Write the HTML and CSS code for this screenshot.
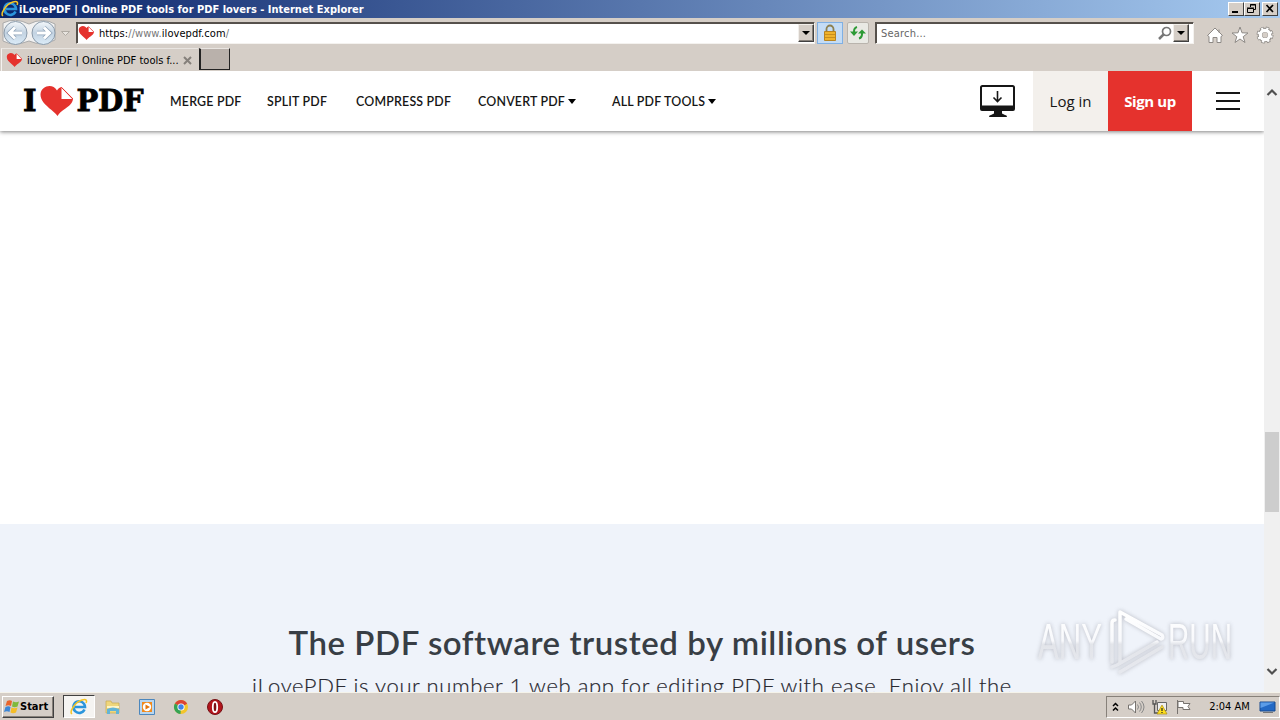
FILE: index.html
```
<!DOCTYPE html>
<html lang="en">
<head>
  <meta charset="UTF-8">
  <meta name="viewport" content="width=device-width, initial-scale=1">
  <title>iLovePDF | Online PDF tools for PDF lovers</title>
  <link rel="stylesheet" href="styles.css">
</head>
<body>
  <svg class="defs" width="0" height="0">
    <defs>
      <linearGradient id="orb" x1="0" y1="0" x2="0" y2="1">
        <stop offset="0" stop-color="#f4f8fb"/>
        <stop offset=".5" stop-color="#c3d3e2"/>
        <stop offset="1" stop-color="#dcecf8"/>
      </linearGradient>
      <symbol id="heart" viewBox="0 0 34 30">
        <path d="M17.500 30C15 26 8 22 3.500 16.500-.5 11.500-.5 5 3.500 2.200 8-1.200 14-.5 17 4.500 18 2.800 19.500 1.500 21.500 1L33 12.500C33 17 29 20 25.500 22.500 22 25 19 27 17.500 30Z" fill="#e5322d"/>
        <path d="M21.500 1.500V13H32.500Z" fill="#fff"/>
        <path d="M21.500 1.500L32.800 13" stroke="#e5322d" fill="none"/>
      </symbol>
      <symbol id="ie" viewBox="0 0 18 18">
        <path d="M14.500 11.500A5.800 5.800 0 1 1 15 9H5" fill="none" stroke="#2b95dc" stroke-width="2.600"/>
        <path d="M2 16C-1 14 5 4 12 2 17 .5 17 3 16 5" fill="none" stroke="#f5c526" stroke-width="1.500"/>
      </symbol>
    </defs>
  </svg>

  <!-- Title bar -->
  <div class="titlebar">
    <svg class="title-icon" width="18" height="18"><use href="#ie"/></svg>
    <span class="title-text">iLovePDF | Online PDF tools for PDF lovers - Internet Explorer</span>
    <div class="win-buttons">
      <span class="win-btn"><svg width="14" height="12"><path d="M3 9h6" stroke="#000" stroke-width="2"/></svg></span>
      <span class="win-btn restore"><svg width="14" height="12"><path d="M5.500 4V1.500h5v5H9M5 2h6M2.500 5.500h6v4h-6zM2 5h7" fill="none" stroke="#000"/></svg></span>
      <span class="win-btn"><svg width="14" height="12"><path d="M3.500 2L10 9M10 2L3.500 9" stroke="#000" stroke-width="1.700"/></svg></span>
    </div>
  </div>

  <!-- Address bar -->
  <div class="toolbar">
    <svg class="nav-orbs" width="74" height="29" viewBox="0 0 74 29">
      <path d="M3 5Q15-1 29 6 43-1 55 6V22Q43 29 29 23 14 29 3 23Z" fill="#f1f1f1" stroke="#aaa"/>
      <circle cx="15.500" cy="15" r="11.500" fill="url(#orb)" stroke="#8b9bab"/>
      <circle cx="43.500" cy="15" r="11.500" fill="url(#orb)" stroke="#8b9bab"/>
      <path d="M22 15H10M15 9.500L9.500 15l5.500 5.500M37 15h12M44 9.500l5.500 5.500-5.500 5.500" fill="none" stroke="#8fa3b8" stroke-width="4.500"/>
      <path d="M22 15H10M15 9.500L9.500 15l5.500 5.500M37 15h12M44 9.500l5.500 5.500-5.500 5.500" fill="none" stroke="#fff" stroke-width="3"/>
      <path d="M61.500 13.500h8l-4 4z" fill="#e8e4df" stroke="#b0aba4"/>
    </svg>
    <div class="field address">
      <svg width="17" height="14"><use href="#heart"/></svg>
      <span class="url"><b>https:</b>//www.<b>ilovepdf.com</b>/</span>
      <span class="drop"><i></i></span>
    </div>
    <span class="tool lock">
      <svg width="18" height="18"><path d="M5.500 9V5a3.500 3.500 0 0 1 7 0V9" fill="none" stroke="#8d8050" stroke-width="1.800"/><path d="M3.500 7.500h11v9h-11z" fill="#efb32c" stroke="#b78422"/><path d="M4 10.500h10M4 13.500h10" stroke="#c98f1d"/></svg>
    </span>
    <span class="tool refresh">
      <svg width="16" height="16"><path d="M7 2Q3.500 3 4 8M9 13.500q3.500-1 3-6" fill="none" stroke="#2c9a35" stroke-width="2"/><path d="M0 6.500h8L4 11zM8 8.500h8L12 4.500z" fill="#2c9a35"/></svg>
    </span>
    <div class="field search">
      <span class="placeholder">Search...</span>
      <svg width="16" height="16"><circle cx="9.500" cy="6.500" r="4" fill="none" stroke="#777" stroke-width="1.700"/><path d="M6.500 9.500L2 14" stroke="#777" stroke-width="2.500"/></svg>
      <span class="drop"><i></i></span>
    </div>
    <div class="tool-icons">
      <svg width="18" height="18"><path d="M1.500 9.500L9 2l7.500 7.500-1.500 1V16.500h-4v-5H7v5H3V10.500zM13 3.500v3" fill="#fff" stroke="#8d8985"/></svg>
      <svg width="18" height="18"><path d="M9 1l2 5.800 6 .2-4.800 3.700L14 16.500 9 13l-5 3.500 1.800-5.800L1 7l6-.2z" fill="#fff" stroke="#8d8985"/></svg>
      <svg width="18" height="18"><circle cx="9" cy="9" r="6.500" fill="none" stroke="#8d8985" stroke-width="4" stroke-dasharray="3.100 2"/><circle cx="9" cy="9" r="5" fill="none" stroke="#8d8985" stroke-width="4.500"/><circle cx="9" cy="9" r="6.500" fill="none" stroke="#fff" stroke-width="2.500" stroke-dasharray="2.100 3" stroke-dashoffset="-.5"/><circle cx="9" cy="9" r="4.700" fill="none" stroke="#fff" stroke-width="3.200"/></svg>
    </div>
  </div>

  <!-- Tabs -->
  <div class="tabs">
    <div class="tab">
      <svg width="17" height="14"><use href="#heart"/></svg>
      <span class="tab-text">iLovePDF | Online PDF tools f...</span>
      <svg class="tab-close" width="9" height="9"><path d="M1 1l7 7M8 1L1 8" stroke="#85807b" stroke-width="2"/></svg>
    </div>
    <div class="tab-new"></div>
  </div>

  <!-- Page -->
  <div class="viewport">
    <div class="page">
      <header class="header">
        <a class="brand">
          <span>I</span>
          <svg width="34" height="30"><use href="#heart"/></svg>
          <span class="brand-pdf">PDF</span>
        </a>
        <nav class="menu">
          <a class="merge">MERGE PDF</a>
          <a class="split">SPLIT PDF</a>
          <a class="compress">COMPRESS PDF</a>
          <a class="convert">CONVERT PDF <i class="caret"></i></a>
          <a class="all">ALL PDF TOOLS <i class="caret"></i></a>
        </nav>
        <svg class="desktop" width="36" height="34" viewBox="0 0 36 34">
          <path d="M2.500 1h30A1.500 1.500 0 0 1 34 2.500V22.500H1V2.500A1.500 1.500 0 0 1 2.500 1Z" fill="#fff" stroke="#161616" stroke-width="2"/>
          <path d="M0 20.500h35V24a2 2 0 0 1-2 2H22v2.500l3 1.500q2 0 2 2H9q0-2 2-2l3-1.500V26H2a2 2 0 0 1-2-2Z" fill="#161616"/>
          <path d="M17.500 6v10.500M13.500 12.500l4 4 4-4" fill="none" stroke="#161616" stroke-width="1.600"/>
        </svg>
        <a class="login">Log in</a>
        <a class="signup">Sign up</a>
        <div class="burger"><i></i><i></i><i></i></div>
      </header>
      <main class="blank"></main>
      <section class="trusted">
        <h2>The PDF software trusted by millions of users</h2>
        <p>iLovePDF is your number 1 web app for editing PDF with ease. Enjoy all the</p>
      </section>
    </div>
    <div class="scrollbar">
      <svg width="16" height="16"><path d="M3.500 10L8 5.500l4.500 4.500" fill="none" stroke="#505050" stroke-width="2.200"/></svg>
      <div class="thumb"></div>
      <svg class="down" width="16" height="16"><path d="M3.500 6L8 10.500 12.500 6" fill="none" stroke="#505050" stroke-width="2.200"/></svg>
    </div>

    <!-- Watermark over the page -->
    <svg class="watermark" width="204" height="76" viewBox="0 0 204 76">
      <defs>
        <linearGradient id="wm" x1="0" y1="10" x2="0" y2="66" gradientUnits="userSpaceOnUse">
          <stop offset="0" stop-color="#fff"/>
          <stop offset=".48" stop-color="#f8f9fc"/>
          <stop offset=".54" stop-color="#e3e5ea"/>
          <stop offset="1" stop-color="#e6e8ee"/>
        </linearGradient>
      </defs>
      <g fill="url(#wm)">
        <text x="4" y="55" textLength="64" lengthAdjust="spacingAndGlyphs">ANY</text>
        <text x="134" y="55" textLength="64" lengthAdjust="spacingAndGlyphs">RUN</text>
      </g>
      <g fill="none" stroke="url(#wm)" stroke-width="3.500" stroke-linejoin="round" stroke-linecap="round">
        <path d="M78 58V19q0-3 3-3"/>
        <path d="M86 58V8L128 31q2 3-1 4L92 15"/>
        <path d="M78 63l5-2 40-23M86 68l42-25"/>
      </g>
    </svg>
  </div>

  <!-- Taskbar -->
  <div class="taskbar">
    <div class="start">
      <svg width="16" height="16"><path d="M3 2q3-1.500 5 0L7 7Q4.500 5.500 1.500 7z" fill="#e8642b"/><path d="M9 2.500q3 1.500 6 0L13.500 7.500q-3 1.500-5.500 0z" fill="#7fb93c"/><path d="M1.500 8q3-1.500 5 0L5.500 13Q3 11.500 0 13z" fill="#3c86d6"/><path d="M7.500 8.500q3 1.500 6 0L12 13.500q-3 1.500-5.500 0z" fill="#f5bd27"/></svg>
      <span>Start</span>
    </div>
    <div class="quick">
      <span class="active"><svg width="18" height="18"><use href="#ie"/></svg></span>
      <svg width="18" height="18"><path d="M2 3h5l1 2h7v10H2z" fill="#efd67c" stroke="#c9ab50" stroke-width=".7"/><path d="M3 8h12v2H3z" fill="#fff5c5"/><path d="M3 16v-5q6-3 12 0v5h-3v-3H6v3z" fill="#63b4d6"/></svg>
      <svg width="18" height="18"><path d="M1.500 1.500h15v15h-15z" fill="#b9d6ef" stroke="#4c87bd"/><path d="M4 4h10v10H4z" fill="#f28a1c"/><circle cx="9" cy="9" r="4.200" fill="#fff"/><path d="M7.500 6.500L12 9l-4.500 2.500z" fill="#e5760d"/></svg>
      <svg width="18" height="18"><circle cx="9" cy="9" r="7" fill="#f3c52b"/><path d="M9 9L2.900 5.500A7 7 0 0 1 15.100 5.500z" fill="#dc4435"/><path d="M9 9L2.900 5.500A7 7 0 0 0 8.500 16z" fill="#35a354"/><path d="M9 5.500h6.100L9 9z" fill="#dc4435"/><circle cx="9" cy="9" r="3.600" fill="#fff"/><circle cx="9" cy="9" r="2.700" fill="#4283e8"/></svg>
      <svg width="18" height="18"><circle cx="9" cy="9" r="7.500" fill="#b3151c" stroke="#751116"/><ellipse cx="9" cy="9" rx="2.200" ry="5.200" fill="#7d1014" stroke="#fff" stroke-width="1.800"/></svg>
    </div>
    <div class="tray">
      <svg width="10" height="12"><path d="M2 5l2.500-2.500L7 5M2 9.500L4.500 7 7 9.500" fill="none" stroke="#000" stroke-width="1.500"/></svg>
      <svg width="18" height="16"><path d="M1.500 6h3l4-4v12l-4-4h-3z" fill="#fff" stroke="#77736f"/><path d="M10.500 5.500q2 2.500 0 5M12.500 3.500q3.500 4.500 0 9M14.500 2q5 6 0 12" fill="none" stroke="#888"/></svg>
      <svg width="18" height="16"><path d="M6.500 3.500h9v8h-9z" fill="#eee" stroke="#666"/><path d="M2 1v4h3V1M3.500 5v9h5" fill="none" stroke="#555" stroke-width="1.300"/><path d="M11 6l5 9H6z" fill="#ffe01c" stroke="#a98b14" stroke-width=".7"/><path d="M11 9v3M11 13v1" stroke="#222" stroke-width="1.200"/></svg>
      <svg width="17" height="16"><path d="M2.500 1v14M3 2.500h5.500v2H15l-2 3 2 3H8v-2H3z" fill="#fff" stroke="#77736f"/></svg>
      <span class="clock">2:04 AM</span>
      <svg width="17" height="16"><path d="M1 3h15v9H1z" fill="#2369c5" stroke="#184a8e"/><path d="M1.500 3.500h14L1.500 9z" fill="#5b9ce8"/><path d="M4 13.500h10" stroke="#777"/></svg>
    </div>
  </div>
</body>
</html>
```
FILE: styles.css
```
* {
  margin: 0;
  padding: 0;
  box-sizing: border-box;
}
body {
  width: 1280px;
  height: 720px;
  overflow: hidden;
  display: flex;
  flex-direction: column;
  background: #d5cec7;
  font-family: "DejaVu Sans Condensed", "DejaVu Sans", sans-serif;
  font-stretch: condensed;
  font-size: 11px;
  color: #000;
}
svg {
  display: block;
  flex: none;
}
.defs {
  position: absolute;
}

/* Title bar */
.titlebar {
  height: 18px;
  flex: none;
  display: flex;
  align-items: center;
  padding: 0 2px 0 1px;
  background: linear-gradient(90deg, #0a246a, #a6caf0);
  color: #fff;
  font-weight: bold;
}
.title-text {
  flex: 1;
  white-space: nowrap;
}
.win-buttons {
  display: flex;
}
.win-btn {
  width: 16px;
  height: 14px;
  background: #d5cec7;
  border: 1px solid;
  border-color: #fff #404040 #404040 #fff;
}
.win-btn.restore {
  margin-right: 2px;
}

/* Address bar */
.toolbar {
  height: 29px;
  flex: none;
  display: flex;
  align-items: center;
}
.nav-orbs {
  margin-right: 2px;
}
.field {
  height: 22px;
  display: flex;
  align-items: center;
  background: #fff;
  border: 1px solid;
  border-color: #57524d #f4f2ef #f4f2ef #57524d;
  box-shadow: inset 1px 1px #55504b;
}
.address {
  width: 739px;
  padding-left: 1px;
}
.url {
  flex: 1;
  margin-left: 4px;
  padding-top: 2px;
  color: #777;
  letter-spacing: 0.07px;
}
.url b {
  font-weight: normal;
  color: #000;
}
.drop {
  width: 16px;
  height: 18px;
  margin-top: 1px;
  display: flex;
  align-items: center;
  justify-content: center;
  background: #d5cec7;
  border: 1px solid;
  border-color: #f2efeb #404040 #404040 #f2efeb;
  box-shadow: inset -1px -1px #87817a;
}
.drop i,
.caret {
  border: 4px solid transparent;
  border-top-color: #000;
  border-bottom: 0;
}
.tool {
  height: 22px;
  display: flex;
  align-items: center;
  justify-content: center;
}
.lock {
  width: 26px;
  margin-left: 2px;
  background: #c4dcf5;
  border: 1px solid #7fb0e4;
}
.refresh {
  width: 22px;
  margin: 0 6px 0 4px;
  background: #e9e9e4;
  border: 1px solid #b9b4ad;
  border-radius: 2px;
}
.search {
  width: 319px;
  padding: 0 4px 0 5px;
}
.placeholder {
  flex: 1;
  padding-top: 2px;
  color: #666;
  letter-spacing: 0.2px;
}
.tool-icons {
  display: flex;
  gap: 7px;
  margin: 4px 0 0 12px;
}

/* Tabs */
.tabs {
  height: 24px;
  flex: none;
  display: flex;
  padding: 1px 0 0 1px;
}
.tab {
  width: 197px;
  display: flex;
  align-items: center;
  padding: 0 6px 0 4px;
  border-top: 1px solid #e9e5e1;
  border-left: 1px solid #f4f2f0;
}
.tab-text {
  flex: 1;
  margin-left: 4px;
  white-space: nowrap;
}
.tab-new {
  width: 31px;
  height: 22px;
  margin-left: 1px;
  background: #b9b1ab;
  border: 1px solid #222;
  border-top-color: #e9e5e1;
  border-width: 1px 1px 1px 2px;
}

/* Page */
.viewport {
  position: relative;
  height: 621px;
  flex: none;
  display: flex;
}
.page {
  width: 1264px;
  overflow: hidden;
  background: #fff;
  font-family: Lato, sans-serif;
  font-stretch: normal;
}
.header {
  position: relative;
  height: 60px;
  display: flex;
  align-items: center;
  padding-left: 23px;
  background: #fff;
  box-shadow: 0 1px 4px rgba(0, 0, 0, 0.5);
}
.brand {
  width: 147px;
  display: flex;
  align-items: center;
  font: bold 29px/61px "DejaVu Serif", serif;
  -webkit-text-stroke: 0.8px #000;
}
.brand svg {
  margin: 0 3px;
}
.brand-pdf {
  letter-spacing: -0.3px;
}
.menu {
  flex: 1;
  display: flex;
  font-size: 12.4px;
  font-weight: 600;
  letter-spacing: 0.2px;
  color: #161616;
}
.menu a {
  display: flex;
  align-items: center;
  white-space: nowrap;
}
.merge {
  width: 97px;
}
.split {
  width: 89px;
}
.compress {
  width: 122px;
}
.convert {
  width: 134px;
}
.caret {
  margin-left: 3px;
  border-width: 5px 4.5px 0;
}
.desktop {
  margin: 1px 17px 0 0;
}
.login,
.signup {
  height: 60px;
  font: 500 15px/61px "Open Sans", sans-serif;
  text-align: center;
}
.login {
  width: 75px;
  background: #f3f0ec;
  color: #161616;
}
.signup {
  width: 84px;
  background: #e5322d;
  color: #fff;
  font-weight: bold;
  letter-spacing: -0.4px;
}
.burger {
  display: flex;
  flex-direction: column;
  gap: 6px;
  margin: 0 24px;
}
.burger i {
  width: 24px;
  height: 2px;
  background: #161616;
}
.blank {
  height: 393px;
}
.trusted {
  height: 168px;
  padding-top: 98px;
  overflow: hidden;
  background: #eff3fa;
  text-align: center;
  white-space: nowrap;
}
.trusted h2 {
  font-size: 33px;
  line-height: 40px;
  font-weight: 600;
  letter-spacing: 0.55px;
  font-variant-ligatures: none;
  color: #383e45;
}
.trusted p {
  font-size: 22px;
  line-height: 32px;
  margin-top: 8px;
  font-weight: 300;
  letter-spacing: 0.61px;
  font-variant-ligatures: none;
  color: #22222a;
  -webkit-text-stroke: 0.2px #33333b;
}
.scrollbar {
  width: 16px;
  padding-top: 14px;
  display: flex;
  flex-direction: column;
  background: #f0f0f0;
}
.thumb {
  width: 14px;
  height: 80px;
  margin: 331px 1px 0;
  background: #cdcdcd;
}
.down {
  margin-top: 151px;
}
.watermark {
  position: absolute;
  left: 1034px;
  top: 533px;
  overflow: visible;
  font: 50px "Liberation Sans Narrow", "Liberation Sans", sans-serif;
  filter: drop-shadow(0 0 2px rgba(120, 120, 130, 0.45));
}

/* Taskbar */
.taskbar {
  flex: 1;
  display: flex;
  align-items: center;
  padding: 0 0 0 2px;
  border-top: 1px solid #f5f3ea;
}
.start {
  width: 52px;
  height: 22px;
  display: flex;
  align-items: center;
  padding-left: 1px;
  background: #d5cec7;
  border: 1px solid;
  border-color: #fff #404040 #404040 #fff;
  box-shadow: inset -1px -1px #87817a;
  font-weight: bold;
}
.quick {
  flex: 1;
  display: flex;
  align-items: center;
  gap: 16px;
  margin-left: 9px;
}
.active {
  width: 32px;
  height: 23px;
  margin-right: -7px;
  display: flex;
  align-items: center;
  justify-content: center;
  background: #f5f4f2;
  border: 1px solid;
  border-color: #404040 #fff #fff #404040;
}
.tray {
  width: 174px;
  height: 22px;
  display: flex;
  align-items: center;
  gap: 6px;
  padding-left: 4px;
  border: 1px solid;
  border-color: #87817a #fff #fff #87817a;
}
.tray svg:last-child {
  margin-right: 3px;
}
.clock {
  flex: 1;
  padding-left: 8px;
  text-align: center;
  white-space: nowrap;
}
```
